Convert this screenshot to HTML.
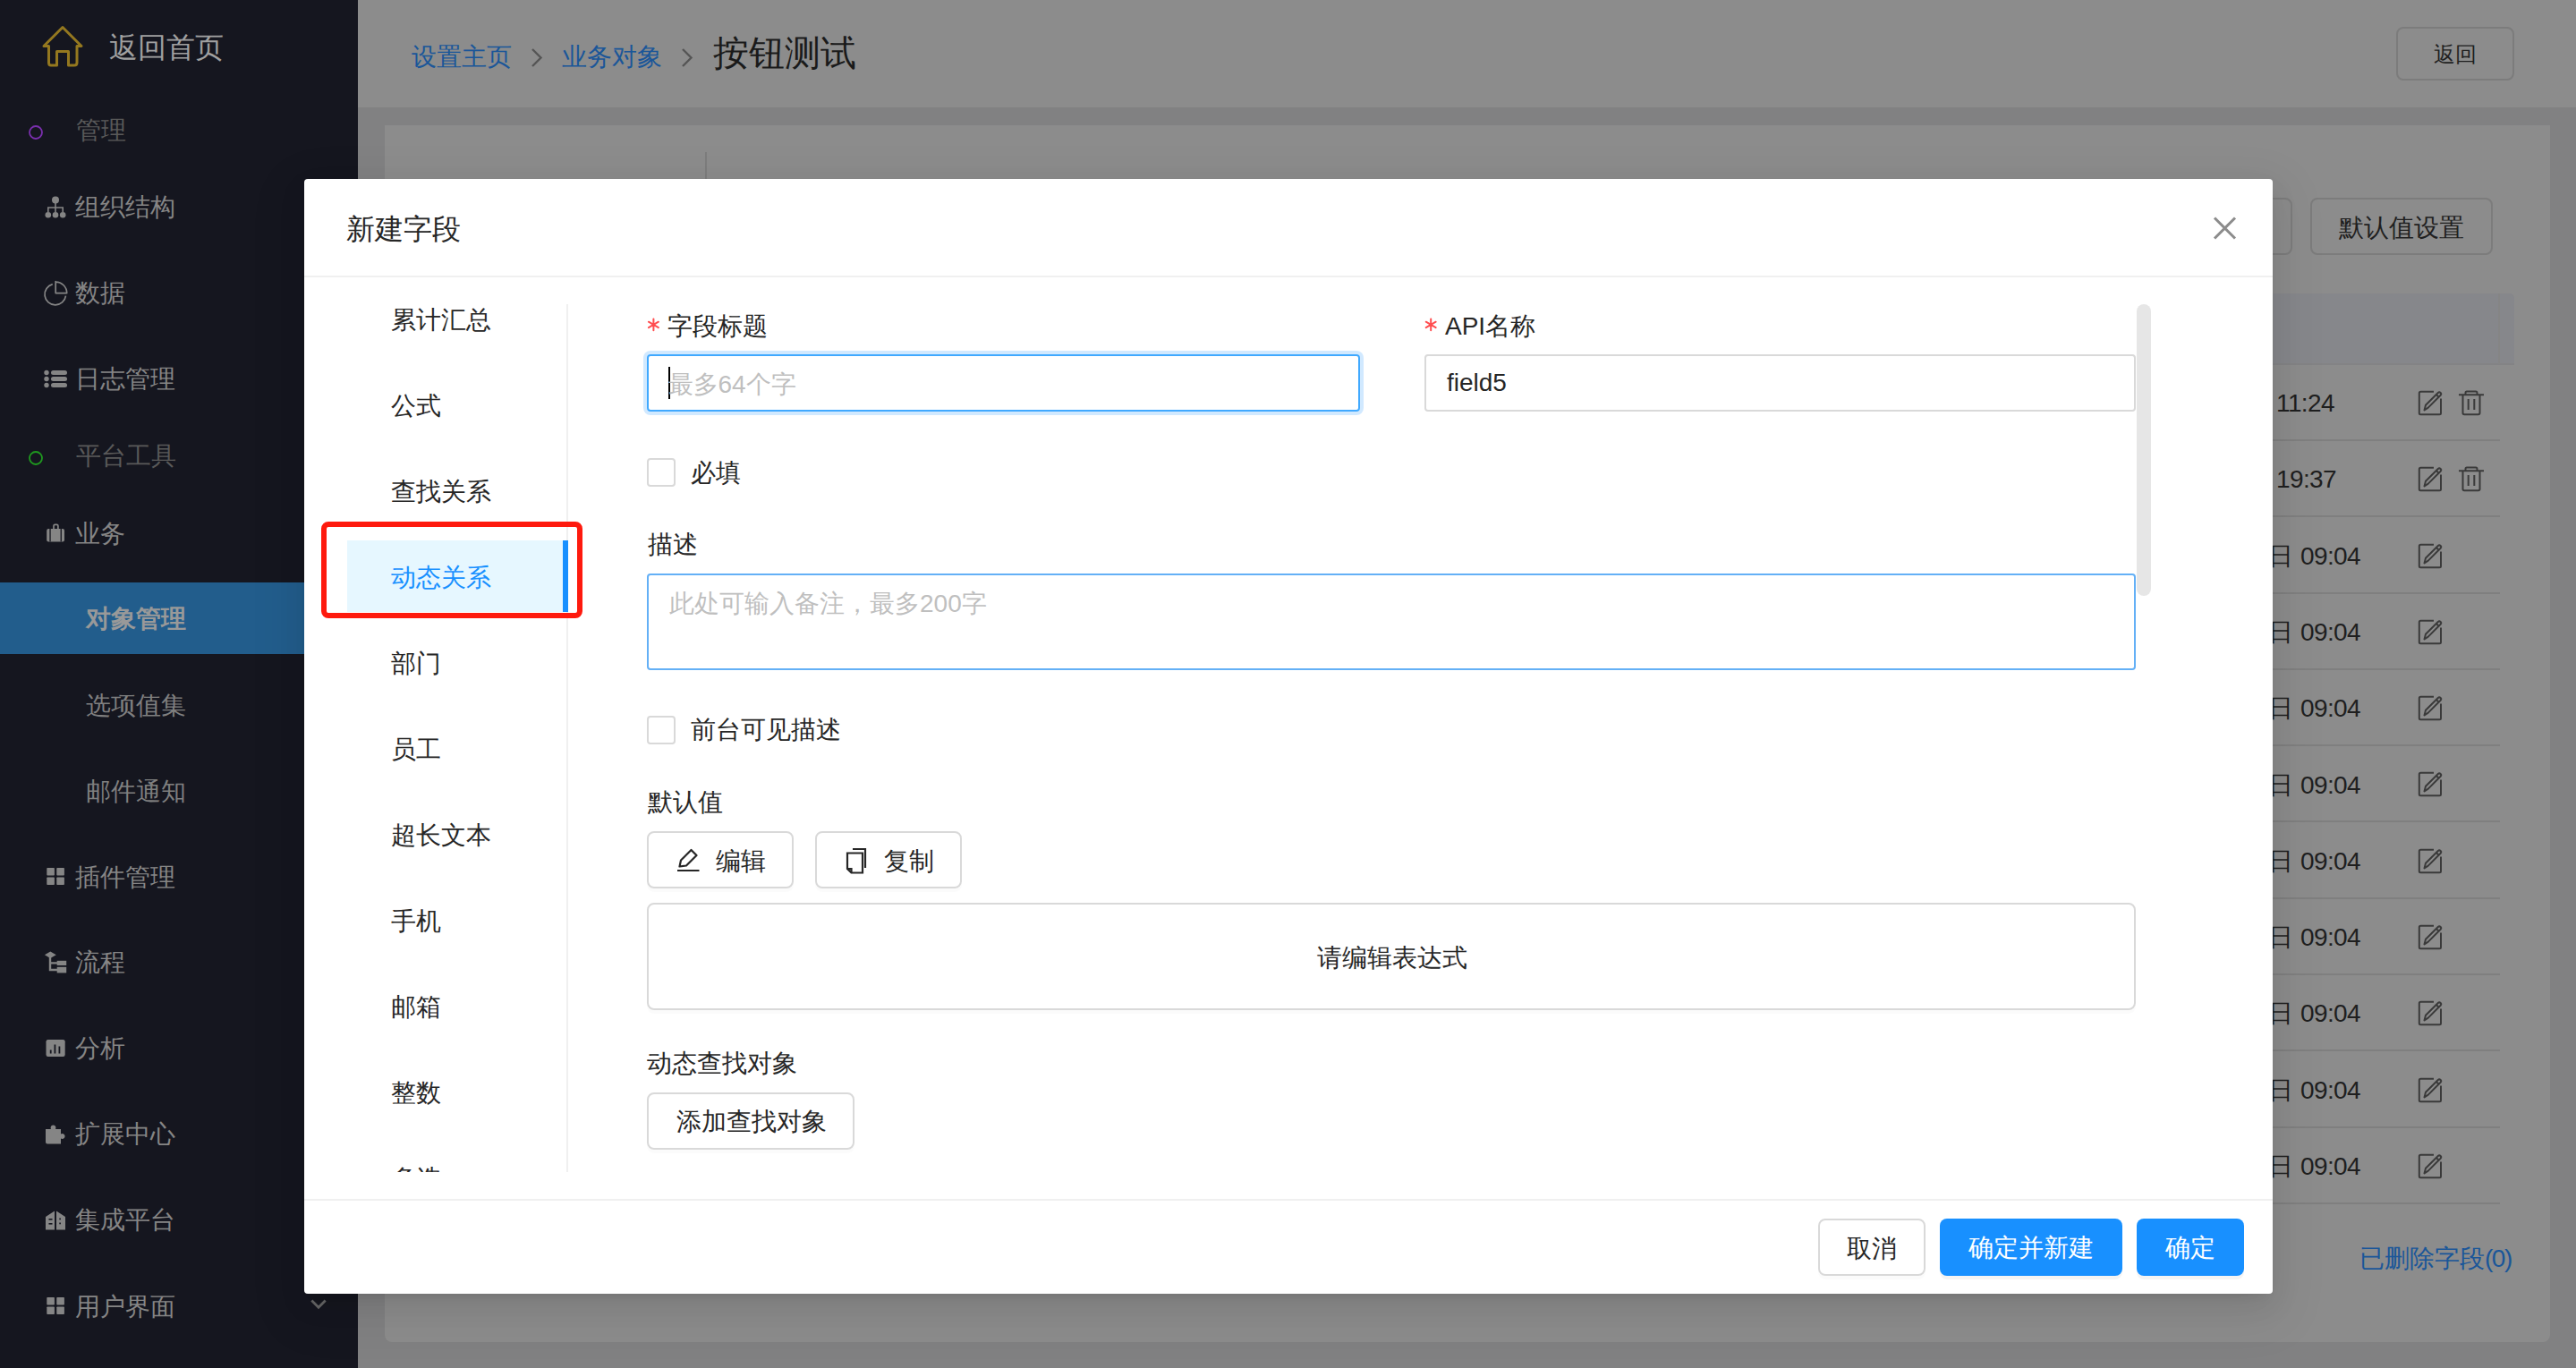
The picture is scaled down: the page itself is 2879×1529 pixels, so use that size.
<!DOCTYPE html>
<html><head><meta charset="utf-8">
<style>
html,body{margin:0;padding:0;}
body{width:2879px;height:1529px;overflow:hidden;position:relative;background:#818182;font-family:"Liberation Sans",sans-serif;}
.t{position:absolute;white-space:nowrap;line-height:1;}
.b{position:absolute;box-sizing:border-box;}
svg{position:absolute;overflow:visible;}
</style></head><body>

<div class="b" style="left:0px;top:0px;width:400px;height:1529px;background:#15161f;"></div>
<svg style="left:0;top:0" width="400" height="100"><path d="M54.5 51.5 L49 51.5 L70 30.5 L91 51.5 L86 51.5 L86 70 Q86 73 83 73 L76.5 73 L76.5 57.5 L63.5 57.5 L63.5 73 L57 73 Q54.5 73 54.5 70 Z" fill="none" stroke="#94781f" stroke-width="3" stroke-linejoin="round"/></svg>
<div class="t" style="left:122px;top:37px;font-size:32px;color:#a0a0a0;">返回首页</div>
<svg style="left:0;top:0" width="80" height="600"><circle cx="40" cy="148" r="7" fill="none" stroke="#7a2fae" stroke-width="1.8"/><circle cx="40" cy="512" r="7" fill="none" stroke="#1f9a1f" stroke-width="1.8"/></svg>
<div class="t" style="left:85px;top:132px;font-size:28px;color:#595959;">管理</div>
<div class="t" style="left:85px;top:496px;font-size:28px;color:#595959;">平台工具</div>
<div class="t" style="left:84px;top:218px;font-size:28px;color:#858585;">组织结构</div>
<div class="t" style="left:84px;top:314px;font-size:28px;color:#858585;">数据</div>
<div class="t" style="left:84px;top:410px;font-size:28px;color:#858585;">日志管理</div>
<div class="t" style="left:84px;top:583px;font-size:28px;color:#858585;">业务</div>
<div class="t" style="left:84px;top:967px;font-size:28px;color:#858585;">插件管理</div>
<div class="t" style="left:84px;top:1062px;font-size:28px;color:#858585;">流程</div>
<div class="t" style="left:84px;top:1158px;font-size:28px;color:#858585;">分析</div>
<div class="t" style="left:84px;top:1254px;font-size:28px;color:#858585;">扩展中心</div>
<div class="t" style="left:84px;top:1350px;font-size:28px;color:#858585;">集成平台</div>
<div class="t" style="left:84px;top:1447px;font-size:28px;color:#858585;">用户界面</div>
<div class="b" style="left:0px;top:651px;width:400px;height:80px;background:#225d8c;"></div>
<div class="t" style="left:96px;top:678px;font-size:28px;color:#999999;font-weight:bold;">对象管理</div>
<div class="t" style="left:96px;top:775px;font-size:28px;color:#7f7f7f;">选项值集</div>
<div class="t" style="left:96px;top:871px;font-size:28px;color:#7f7f7f;">邮件通知</div>
<svg style="left:0;top:0" width="100" height="1529" fill="#858585">
<!-- org -->
<circle cx="62" cy="223.5" r="4"/><circle cx="53.8" cy="240.3" r="3.3"/><circle cx="62" cy="240.3" r="3.3"/><circle cx="70.2" cy="240.3" r="3.3"/>
<path d="M62 226 V237 M53.8 237 V232 H70.2 V237" stroke="#858585" stroke-width="1.6" fill="none"/>
<!-- pie -->
<path d="M58.75 317.6 A11.8 11.8 0 1 0 73.5 330.6" fill="none" stroke="#858585" stroke-width="1.7"/>
<path d="M62.2 314.6 V327.6 H74.7 A12.5 12.5 0 0 0 62.2 315.1 Z" fill="none" stroke="#858585" stroke-width="1.7" stroke-linejoin="round"/>
<!-- list -->
<circle cx="52" cy="416.5" r="2.7"/><circle cx="52" cy="423.5" r="2.7"/><circle cx="52" cy="430.5" r="2.7"/>
<rect x="57" y="414" width="18" height="5" rx="2.5"/><rect x="57" y="421" width="18" height="5" rx="2.5"/><rect x="57" y="428" width="18" height="5" rx="2.5"/>
<!-- bag -->
<path d="M60 591.5 V587.8 Q60 586.3 61.5 586.3 H63.4 Q64.9 586.3 64.9 587.8 V591.5" fill="none" stroke="#858585" stroke-width="1.7"/>
<rect x="52.2" y="591" width="19.8" height="14.4" rx="2"/>
<rect x="55.4" y="591" width="1.3" height="14.4" fill="#15161f"/><rect x="67.6" y="591" width="1.3" height="14.4" fill="#15161f"/>
<!-- appstore -->
<rect x="52.3" y="970" width="8.6" height="8.6" rx="0.8"/><rect x="63.3" y="970" width="8.6" height="8.6" rx="0.8"/>
<rect x="52.3" y="980.5" width="8.6" height="8.6" rx="0.8"/><rect x="63.3" y="980.5" width="8.6" height="8.6" rx="0.8"/>
<!-- flow -->
<path d="M49.9 1067.3 L56.3 1063.5 L62.8 1067.3 L56.3 1071 Z"/>
<path d="M56 1069 V1084 H65 M56 1076.4 H65" stroke="#858585" stroke-width="2.4" fill="none"/>
<rect x="63.7" y="1073.8" width="10.5" height="5.2"/><rect x="63.7" y="1080.8" width="10.5" height="6.6"/>
<!-- fund -->
<rect x="51.5" y="1162" width="21.2" height="19" rx="2.2"/>
<rect x="55.8" y="1173.5" width="1.8" height="4" fill="#15161f"/><rect x="60.5" y="1167.5" width="1.8" height="10" fill="#15161f"/><rect x="65.5" y="1169.5" width="1.8" height="8" fill="#15161f"/>
<!-- puzzle -->
<path d="M51 1262 H57 Q56 1260 57.5 1258.2 Q59.5 1256.6 61.5 1258.2 Q63 1260 62 1262 H68 V1267.5 Q70 1266.5 71.8 1268 Q73.3 1270 71.8 1272 Q70 1273.5 68 1272.5 V1278.5 H53 Q51 1278.5 51 1276.5 Z"/>
<!-- building -->
<path d="M51 1374.5 V1360 L61 1353.5 V1374.5 Z M63 1374.5 V1353.5 L73 1360 V1374.5 Z"/>
<rect x="54.5" y="1362" width="4" height="1.6" fill="#15161f"/><rect x="54.5" y="1367" width="4" height="1.6" fill="#15161f"/>
<rect x="66.3" y="1361.5" width="1.6" height="1.8" fill="#15161f"/><rect x="66.3" y="1366.5" width="1.6" height="1.8" fill="#15161f"/>
<!-- appstore 2 -->
<rect x="52.3" y="1450" width="8.6" height="8.6" rx="0.8"/><rect x="63.3" y="1450" width="8.6" height="8.6" rx="0.8"/>
<rect x="52.3" y="1460.5" width="8.6" height="8.6" rx="0.8"/><rect x="63.3" y="1460.5" width="8.6" height="8.6" rx="0.8"/>
</svg>
<svg style="left:0;top:0" width="400" height="1529"><path d="M348.3 1453.5 L356 1461.2 L363.7 1453.5" fill="none" stroke="#666" stroke-width="2.8"/></svg>
<div class="b" style="left:400px;top:0px;width:2479px;height:120px;background:#8c8c8c;"></div>
<div class="b" style="left:430px;top:140px;width:2420px;height:1360px;background:#8c8c8c;border-radius:0 0 8px 8px;"></div>
<div class="t" style="left:460px;top:50px;font-size:28px;color:#1a5699;">设置主页</div>
<div class="t" style="left:628px;top:50px;font-size:28px;color:#1a5699;">业务对象</div>
<div class="t" style="left:797px;top:39px;font-size:40px;color:#1a1a1a;">按钮测试</div>
<svg style="left:0;top:0" width="1000" height="100"><path d="M595 55 L604.5 64.5 L595 74 M763 55 L772.5 64.5 L763 74" fill="none" stroke="#555" stroke-width="2.4"/></svg>
<div class="b" style="left:2678px;top:30px;width:132px;height:60px;border:2px solid #7c7c7c;border-radius:8px;"></div>
<div class="t" style="left:2720px;top:49px;font-size:24px;color:#1f1f1f;">返回</div>
<div class="b" style="left:788px;top:170px;width:2px;height:40px;background:#7d7d7d;"></div>
<div class="b" style="left:2420px;top:221px;width:142px;height:64px;border:2px solid #7c7c7c;border-radius:8px;"></div>
<div class="b" style="left:2582px;top:221px;width:204px;height:64px;border:2px solid #7c7c7c;border-radius:8px;"></div>
<div class="t" style="left:2614px;top:241px;font-size:28px;color:#1f1f1f;">默认值设置</div>
<div class="b" style="left:2500px;top:328px;width:310px;height:80px;background:#86878b;border-radius:0 5px 0 0;border-bottom:2px solid #838385;"></div>
<div class="b" style="left:2792px;top:328px;width:2px;height:79px;background:#858585;"></div>
<div class="b" style="left:2500px;top:491px;width:294px;height:2px;background:#7f7f7f;"></div>
<div class="t" style="left:2544px;top:437px;font-size:28px;color:#1f1f1f;letter-spacing:-0.6px;">11:24</div>
<svg style="left:2700px;top:436px" width="80" height="30"><path d="M20 1.8 H5.5 Q3.8 1.8 3.8 3.5 V25.8 Q3.8 27.3 5.5 27.3 H26.3 Q28 27.3 28 25.8 V9.5" fill="none" stroke="#3a3a3a" stroke-width="2"/><path d="M9.5 22.5 L11 16.8 L24.8 3 Q26.2 1.7 27.6 3 Q28.9 4.4 27.6 5.8 L13.8 19.6 Z M22.8 5 L25.6 7.8" fill="none" stroke="#3a3a3a" stroke-width="2" stroke-linejoin="round"/></svg>
<svg style="left:2745px;top:436px" width="40" height="30"><path d="M3 5.2 H31 M10.5 5.2 V3 Q10.5 1.5 12 1.5 H22 Q23.5 1.5 23.5 3 V5.2 M7.5 5.2 V25.5 Q7.5 27.3 9.3 27.3 H24.7 Q26.5 27.3 26.5 25.5 V5.2 M13.7 10 V22 M20.3 10 V22" fill="none" stroke="#3a3a3a" stroke-width="2"/></svg>
<div class="b" style="left:2500px;top:576px;width:294px;height:2px;background:#7f7f7f;"></div>
<div class="t" style="left:2544px;top:522px;font-size:28px;color:#1f1f1f;letter-spacing:-0.6px;">19:37</div>
<svg style="left:2700px;top:521px" width="80" height="30"><path d="M20 1.8 H5.5 Q3.8 1.8 3.8 3.5 V25.8 Q3.8 27.3 5.5 27.3 H26.3 Q28 27.3 28 25.8 V9.5" fill="none" stroke="#3a3a3a" stroke-width="2"/><path d="M9.5 22.5 L11 16.8 L24.8 3 Q26.2 1.7 27.6 3 Q28.9 4.4 27.6 5.8 L13.8 19.6 Z M22.8 5 L25.6 7.8" fill="none" stroke="#3a3a3a" stroke-width="2" stroke-linejoin="round"/></svg>
<svg style="left:2745px;top:521px" width="40" height="30"><path d="M3 5.2 H31 M10.5 5.2 V3 Q10.5 1.5 12 1.5 H22 Q23.5 1.5 23.5 3 V5.2 M7.5 5.2 V25.5 Q7.5 27.3 9.3 27.3 H24.7 Q26.5 27.3 26.5 25.5 V5.2 M13.7 10 V22 M20.3 10 V22" fill="none" stroke="#3a3a3a" stroke-width="2"/></svg>
<div class="b" style="left:2500px;top:662px;width:294px;height:2px;background:#7f7f7f;"></div>
<div class="t" style="left:2535px;top:608px;font-size:28px;color:#1f1f1f;">日</div>
<div class="t" style="left:2571px;top:608px;font-size:28px;color:#1f1f1f;letter-spacing:-0.6px;">09:04</div>
<svg style="left:2700px;top:607px" width="80" height="30"><path d="M20 1.8 H5.5 Q3.8 1.8 3.8 3.5 V25.8 Q3.8 27.3 5.5 27.3 H26.3 Q28 27.3 28 25.8 V9.5" fill="none" stroke="#3a3a3a" stroke-width="2"/><path d="M9.5 22.5 L11 16.8 L24.8 3 Q26.2 1.7 27.6 3 Q28.9 4.4 27.6 5.8 L13.8 19.6 Z M22.8 5 L25.6 7.8" fill="none" stroke="#3a3a3a" stroke-width="2" stroke-linejoin="round"/></svg>
<div class="b" style="left:2500px;top:747px;width:294px;height:2px;background:#7f7f7f;"></div>
<div class="t" style="left:2535px;top:693px;font-size:28px;color:#1f1f1f;">日</div>
<div class="t" style="left:2571px;top:693px;font-size:28px;color:#1f1f1f;letter-spacing:-0.6px;">09:04</div>
<svg style="left:2700px;top:692px" width="80" height="30"><path d="M20 1.8 H5.5 Q3.8 1.8 3.8 3.5 V25.8 Q3.8 27.3 5.5 27.3 H26.3 Q28 27.3 28 25.8 V9.5" fill="none" stroke="#3a3a3a" stroke-width="2"/><path d="M9.5 22.5 L11 16.8 L24.8 3 Q26.2 1.7 27.6 3 Q28.9 4.4 27.6 5.8 L13.8 19.6 Z M22.8 5 L25.6 7.8" fill="none" stroke="#3a3a3a" stroke-width="2" stroke-linejoin="round"/></svg>
<div class="b" style="left:2500px;top:832px;width:294px;height:2px;background:#7f7f7f;"></div>
<div class="t" style="left:2535px;top:778px;font-size:28px;color:#1f1f1f;">日</div>
<div class="t" style="left:2571px;top:778px;font-size:28px;color:#1f1f1f;letter-spacing:-0.6px;">09:04</div>
<svg style="left:2700px;top:777px" width="80" height="30"><path d="M20 1.8 H5.5 Q3.8 1.8 3.8 3.5 V25.8 Q3.8 27.3 5.5 27.3 H26.3 Q28 27.3 28 25.8 V9.5" fill="none" stroke="#3a3a3a" stroke-width="2"/><path d="M9.5 22.5 L11 16.8 L24.8 3 Q26.2 1.7 27.6 3 Q28.9 4.4 27.6 5.8 L13.8 19.6 Z M22.8 5 L25.6 7.8" fill="none" stroke="#3a3a3a" stroke-width="2" stroke-linejoin="round"/></svg>
<div class="b" style="left:2500px;top:917px;width:294px;height:2px;background:#7f7f7f;"></div>
<div class="t" style="left:2535px;top:864px;font-size:28px;color:#1f1f1f;">日</div>
<div class="t" style="left:2571px;top:864px;font-size:28px;color:#1f1f1f;letter-spacing:-0.6px;">09:04</div>
<svg style="left:2700px;top:862px" width="80" height="30"><path d="M20 1.8 H5.5 Q3.8 1.8 3.8 3.5 V25.8 Q3.8 27.3 5.5 27.3 H26.3 Q28 27.3 28 25.8 V9.5" fill="none" stroke="#3a3a3a" stroke-width="2"/><path d="M9.5 22.5 L11 16.8 L24.8 3 Q26.2 1.7 27.6 3 Q28.9 4.4 27.6 5.8 L13.8 19.6 Z M22.8 5 L25.6 7.8" fill="none" stroke="#3a3a3a" stroke-width="2" stroke-linejoin="round"/></svg>
<div class="b" style="left:2500px;top:1003px;width:294px;height:2px;background:#7f7f7f;"></div>
<div class="t" style="left:2535px;top:949px;font-size:28px;color:#1f1f1f;">日</div>
<div class="t" style="left:2571px;top:949px;font-size:28px;color:#1f1f1f;letter-spacing:-0.6px;">09:04</div>
<svg style="left:2700px;top:948px" width="80" height="30"><path d="M20 1.8 H5.5 Q3.8 1.8 3.8 3.5 V25.8 Q3.8 27.3 5.5 27.3 H26.3 Q28 27.3 28 25.8 V9.5" fill="none" stroke="#3a3a3a" stroke-width="2"/><path d="M9.5 22.5 L11 16.8 L24.8 3 Q26.2 1.7 27.6 3 Q28.9 4.4 27.6 5.8 L13.8 19.6 Z M22.8 5 L25.6 7.8" fill="none" stroke="#3a3a3a" stroke-width="2" stroke-linejoin="round"/></svg>
<div class="b" style="left:2500px;top:1088px;width:294px;height:2px;background:#7f7f7f;"></div>
<div class="t" style="left:2535px;top:1034px;font-size:28px;color:#1f1f1f;">日</div>
<div class="t" style="left:2571px;top:1034px;font-size:28px;color:#1f1f1f;letter-spacing:-0.6px;">09:04</div>
<svg style="left:2700px;top:1033px" width="80" height="30"><path d="M20 1.8 H5.5 Q3.8 1.8 3.8 3.5 V25.8 Q3.8 27.3 5.5 27.3 H26.3 Q28 27.3 28 25.8 V9.5" fill="none" stroke="#3a3a3a" stroke-width="2"/><path d="M9.5 22.5 L11 16.8 L24.8 3 Q26.2 1.7 27.6 3 Q28.9 4.4 27.6 5.8 L13.8 19.6 Z M22.8 5 L25.6 7.8" fill="none" stroke="#3a3a3a" stroke-width="2" stroke-linejoin="round"/></svg>
<div class="b" style="left:2500px;top:1173px;width:294px;height:2px;background:#7f7f7f;"></div>
<div class="t" style="left:2535px;top:1119px;font-size:28px;color:#1f1f1f;">日</div>
<div class="t" style="left:2571px;top:1119px;font-size:28px;color:#1f1f1f;letter-spacing:-0.6px;">09:04</div>
<svg style="left:2700px;top:1118px" width="80" height="30"><path d="M20 1.8 H5.5 Q3.8 1.8 3.8 3.5 V25.8 Q3.8 27.3 5.5 27.3 H26.3 Q28 27.3 28 25.8 V9.5" fill="none" stroke="#3a3a3a" stroke-width="2"/><path d="M9.5 22.5 L11 16.8 L24.8 3 Q26.2 1.7 27.6 3 Q28.9 4.4 27.6 5.8 L13.8 19.6 Z M22.8 5 L25.6 7.8" fill="none" stroke="#3a3a3a" stroke-width="2" stroke-linejoin="round"/></svg>
<div class="b" style="left:2500px;top:1259px;width:294px;height:2px;background:#7f7f7f;"></div>
<div class="t" style="left:2535px;top:1205px;font-size:28px;color:#1f1f1f;">日</div>
<div class="t" style="left:2571px;top:1205px;font-size:28px;color:#1f1f1f;letter-spacing:-0.6px;">09:04</div>
<svg style="left:2700px;top:1204px" width="80" height="30"><path d="M20 1.8 H5.5 Q3.8 1.8 3.8 3.5 V25.8 Q3.8 27.3 5.5 27.3 H26.3 Q28 27.3 28 25.8 V9.5" fill="none" stroke="#3a3a3a" stroke-width="2"/><path d="M9.5 22.5 L11 16.8 L24.8 3 Q26.2 1.7 27.6 3 Q28.9 4.4 27.6 5.8 L13.8 19.6 Z M22.8 5 L25.6 7.8" fill="none" stroke="#3a3a3a" stroke-width="2" stroke-linejoin="round"/></svg>
<div class="b" style="left:2500px;top:1344px;width:294px;height:2px;background:#7f7f7f;"></div>
<div class="t" style="left:2535px;top:1290px;font-size:28px;color:#1f1f1f;">日</div>
<div class="t" style="left:2571px;top:1290px;font-size:28px;color:#1f1f1f;letter-spacing:-0.6px;">09:04</div>
<svg style="left:2700px;top:1289px" width="80" height="30"><path d="M20 1.8 H5.5 Q3.8 1.8 3.8 3.5 V25.8 Q3.8 27.3 5.5 27.3 H26.3 Q28 27.3 28 25.8 V9.5" fill="none" stroke="#3a3a3a" stroke-width="2"/><path d="M9.5 22.5 L11 16.8 L24.8 3 Q26.2 1.7 27.6 3 Q28.9 4.4 27.6 5.8 L13.8 19.6 Z M22.8 5 L25.6 7.8" fill="none" stroke="#3a3a3a" stroke-width="2" stroke-linejoin="round"/></svg>
<div class="t" style="left:2637px;top:1393px;font-size:28px;color:#1a5699;">已删除字段<span style="letter-spacing:-1.5px">(0</span>)</div>
<div class="b" style="left:340px;top:200px;width:2200px;height:1246px;background:#fff;border-radius:4px;box-shadow:0 6px 12px -8px rgba(0,0,0,0.12),0 12px 32px 0 rgba(0,0,0,0.08),0 18px 56px 16px rgba(0,0,0,0.05);"></div>
<div class="t" style="left:387px;top:240px;font-size:32px;color:#262626;">新建字段</div>
<svg style="left:0;top:0" width="2600" height="300"><path d="M2475 243.5 L2498 266.5 M2498 243.5 L2475 266.5" stroke="#8c8c8c" stroke-width="3"/></svg>
<div class="b" style="left:340px;top:308px;width:2200px;height:2px;background:#f0f0f0;"></div>
<div class="b" style="left:633px;top:340px;width:2px;height:970px;background:#f0f0f0;"></div>
<div class="b" style="left:388px;top:604px;width:247px;height:80px;background:#e6f7ff;"></div>
<div class="b" style="left:629px;top:604px;width:6px;height:80px;background:#1890ff;"></div>
<div class="b" style="left:340px;top:310px;width:292px;height:1000px;overflow:hidden;">
<div class="t" style="left:97px;top:34px;font-size:28px;color:#262626;">累计汇总</div>
<div class="t" style="left:97px;top:130px;font-size:28px;color:#262626;">公式</div>
<div class="t" style="left:97px;top:226px;font-size:28px;color:#262626;">查找关系</div>
<div class="t" style="left:97px;top:322px;font-size:28px;color:#1890ff;">动态关系</div>
<div class="t" style="left:97px;top:418px;font-size:28px;color:#262626;">部门</div>
<div class="t" style="left:97px;top:514px;font-size:28px;color:#262626;">员工</div>
<div class="t" style="left:97px;top:610px;font-size:28px;color:#262626;">超长文本</div>
<div class="t" style="left:97px;top:706px;font-size:28px;color:#262626;">手机</div>
<div class="t" style="left:97px;top:802px;font-size:28px;color:#262626;">邮箱</div>
<div class="t" style="left:97px;top:898px;font-size:28px;color:#262626;">整数</div>
<div class="t" style="left:97px;top:994px;font-size:28px;color:#262626;">多选</div>
</div>
<div class="b" style="left:359px;top:583px;width:292px;height:108px;border:6px solid #fe1a0e;border-radius:8px;"></div>
<svg style="left:0;top:0" width="2400" height="400"><path d="M730.4 356.59999999999997 V369.2 M724.9 359.7 L735.9 366.09999999999997 M724.9 366.09999999999997 L735.9 359.7" stroke="#ff4d4f" stroke-width="2" stroke-linecap="round"/></svg>
<div class="t" style="left:746px;top:351px;font-size:28px;color:#262626;">字段标题</div>
<div class="b" style="left:723px;top:396px;width:797px;height:64px;border:2px solid #40a9ff;border-radius:4px;box-shadow:0 0 0 4px rgba(24,144,255,0.2);"></div>
<div class="b" style="left:747px;top:410px;width:2px;height:36px;background:#000;"></div>
<div class="t" style="left:746.5px;top:416px;font-size:28px;color:#bfbfbf;">最多64个字</div>
<svg style="left:0;top:0" width="2400" height="400"><path d="M1599.2 356.59999999999997 V369.2 M1593.7 359.7 L1604.7 366.09999999999997 M1593.7 366.09999999999997 L1604.7 359.7" stroke="#ff4d4f" stroke-width="2" stroke-linecap="round"/></svg>
<div class="t" style="left:1615px;top:351px;font-size:28px;color:#262626;">API名称</div>
<div class="b" style="left:1592px;top:396px;width:795px;height:64px;border:2px solid #d9d9d9;border-radius:4px;"></div>
<div class="t" style="left:1617px;top:414px;font-size:28px;color:#262626;">field5</div>
<div class="b" style="left:723px;top:512px;width:32px;height:32px;border:2px solid #d9d9d9;border-radius:4px;"></div>
<div class="t" style="left:772px;top:515px;font-size:28px;color:#262626;">必填</div>
<div class="t" style="left:724px;top:595px;font-size:28px;color:#262626;">描述</div>
<div class="b" style="left:723px;top:641px;width:1664px;height:108px;border:2px solid #64b0f6;border-radius:4px;"></div>
<div class="t" style="left:748px;top:661px;font-size:28px;color:#bfbfbf;">此处可输入备注，最多200字</div>
<div class="b" style="left:723px;top:800px;width:32px;height:32px;border:2px solid #d9d9d9;border-radius:4px;"></div>
<div class="t" style="left:772px;top:802px;font-size:28px;color:#262626;">前台可见描述</div>
<div class="t" style="left:724px;top:883px;font-size:28px;color:#262626;">默认值</div>
<div class="b" style="left:723px;top:929px;width:164px;height:64px;border:2px solid #d9d9d9;border-radius:8px;box-shadow:0 4px 0 rgba(0,0,0,0.015);"></div>
<div class="b" style="left:911px;top:929px;width:164px;height:64px;border:2px solid #d9d9d9;border-radius:8px;box-shadow:0 4px 0 rgba(0,0,0,0.015);"></div>
<svg style="left:0;top:0" width="1100" height="1000"><path d="M757 973 H781.5 M759.5 968.5 L761 961.5 L772.5 950 L778.5 956 L767 967.5 Z" fill="none" stroke="#262626" stroke-width="2.2" stroke-linejoin="round"/></svg>
<div class="t" style="left:800px;top:949px;font-size:28px;color:#262626;">编辑</div>
<svg style="left:0;top:0" width="1100" height="1000"><path d="M952 953.5 H964 V975.5 H951.5 L947 971 V953.5 Z M947 971 H951.5 V975.5" fill="none" stroke="#262626" stroke-width="2.2"/><path d="M953 949 H967 V970" fill="none" stroke="#262626" stroke-width="2.2"/></svg>
<div class="t" style="left:988px;top:949px;font-size:28px;color:#262626;">复制</div>
<div class="b" style="left:723px;top:1009px;width:1664px;height:120px;border:2px solid #d9d9d9;border-radius:8px;box-shadow:0 4px 0 rgba(0,0,0,0.015);"></div>
<div class="t" style="left:1472px;top:1057px;font-size:28px;color:#262626;">请编辑表达式</div>
<div class="t" style="left:723px;top:1175px;font-size:28px;color:#262626;">动态查找对象</div>
<div class="b" style="left:723px;top:1221px;width:232px;height:64px;border:2px solid #d9d9d9;border-radius:8px;box-shadow:0 4px 0 rgba(0,0,0,0.015);"></div>
<div class="t" style="left:756px;top:1240px;font-size:28px;color:#262626;">添加查找对象</div>
<div class="b" style="left:2388px;top:340px;width:16px;height:326px;background:#e6e6e6;border-radius:8px;"></div>
<div class="b" style="left:340px;top:1340px;width:2200px;height:2px;background:#f0f0f0;"></div>
<div class="b" style="left:2032px;top:1362px;width:120px;height:64px;border:2px solid #d9d9d9;border-radius:8px;box-shadow:0 4px 0 rgba(0,0,0,0.015);"></div>
<div class="t" style="left:2064px;top:1382px;font-size:28px;color:#262626;">取消</div>
<div class="b" style="left:2168px;top:1362px;width:204px;height:64px;background:#1890ff;border-radius:8px;box-shadow:0 4px 0 rgba(0,0,0,0.045);"></div>
<div class="t" style="left:2200px;top:1381px;font-size:28px;color:#ffffff;">确定并新建</div>
<div class="b" style="left:2388px;top:1362px;width:120px;height:64px;background:#1890ff;border-radius:8px;box-shadow:0 4px 0 rgba(0,0,0,0.045);"></div>
<div class="t" style="left:2420px;top:1381px;font-size:28px;color:#ffffff;">确定</div>
</body></html>
